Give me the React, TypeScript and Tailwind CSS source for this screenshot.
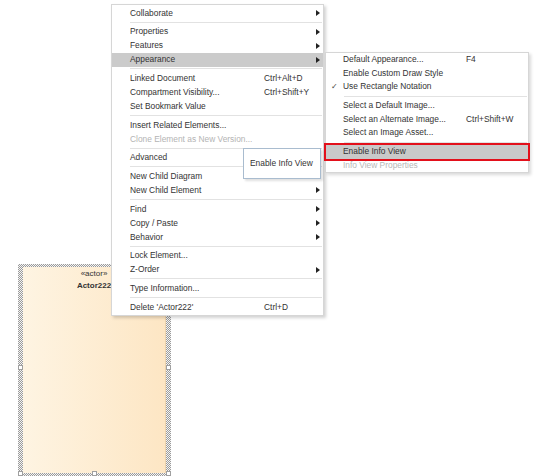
type Row =
  | { sep: true }
  | {
      sep?: false;
      label: string;
      shortcut?: string;
      arrow?: boolean;
      disabled?: boolean;
      active?: boolean;
      check?: boolean;
      boxed?: boolean;
    };

const mainItems: Row[] = [
  { label: "Collaborate", arrow: true },
  { sep: true },
  { label: "Properties", arrow: true },
  { label: "Features", arrow: true },
  { label: "Appearance", arrow: true, active: true },
  { sep: true },
  { label: "Linked Document", shortcut: "Ctrl+Alt+D" },
  { label: "Compartment Visibility...", shortcut: "Ctrl+Shift+Y" },
  { label: "Set Bookmark Value" },
  { sep: true },
  { label: "Insert Related Elements..." },
  { label: "Clone Element as New Version...", disabled: true },
  { sep: true },
  { label: "Advanced", arrow: true },
  { sep: true },
  { label: "New Child Diagram", arrow: true },
  { label: "New Child Element", arrow: true },
  { sep: true },
  { label: "Find", arrow: true },
  { label: "Copy / Paste", arrow: true },
  { label: "Behavior", arrow: true },
  { sep: true },
  { label: "Lock Element..." },
  { label: "Z-Order", arrow: true },
  { sep: true },
  { label: "Type Information..." },
  { sep: true },
  { label: "Delete 'Actor222'", shortcut: "Ctrl+D" },
];

const subItems: Row[] = [
  { label: "Default Appearance...", shortcut: "F4" },
  { label: "Enable Custom Draw Style" },
  { label: "Use Rectangle Notation", check: true },
  { sep: true },
  { label: "Select a Default Image..." },
  { label: "Select an Alternate Image...", shortcut: "Ctrl+Shift+W" },
  { label: "Select an Image Asset..." },
  { sep: true },
  { label: "Enable Info View", boxed: true },
  { label: "Info View Properties", disabled: true },
];

function Arrow() {
  return (
    <svg width="4" height="6" viewBox="0 0 4 6" className="ml-auto mr-[3px]">
      <path d="M0 0L4 3L0 6Z" fill="#222" />
    </svg>
  );
}

function MainMenu() {
  return (
    <div className="absolute left-[111px] top-[4px] w-[213px] border border-[#d6d6d6] bg-white py-px shadow-[2px_2px_3px_rgba(0,0,0,0.18)]">
      {mainItems.map((it, i) =>
        it.sep ? (
          <div key={i} className="flex h-[4.67px] items-center pl-[18px] pr-px">
            <div className="h-px w-full bg-[#e2e2e2]" />
          </div>
        ) : (
          <div
            key={i}
            className={`flex h-[14px] items-center pl-[18px] ${
              it.active ? "bg-[#cbcbcb]" : ""
            } ${it.disabled ? "text-[#b4b4b4]" : "text-[#333]"}`}
          >
            <span className="w-[134px] shrink-0 whitespace-nowrap">{it.label}</span>
            {it.shortcut && <span>{it.shortcut}</span>}
            {it.arrow && <Arrow />}
          </div>
        )
      )}
    </div>
  );
}

function SubMenu() {
  return (
    <div className="absolute left-[325px] top-[52px] w-[204px] border border-[#d6d6d6] bg-white shadow-[2px_2px_3px_rgba(0,0,0,0.15)]">
      {subItems.map((it, i) =>
        it.sep ? (
          <div key={i} className="flex h-[5.5px] items-center pl-[18px] pr-px">
            <div className="h-px w-full bg-[#e2e2e2]" />
          </div>
        ) : (
          <div
            key={i}
            className={`flex h-[13.5px] items-center ${
              it.boxed
                ? "bg-[#c9c9c9] outline-2 outline-offset-[0.5px] outline-[#e3101b]"
                : ""
            } ${it.disabled ? "text-[#b8b8b8]" : "text-[#333]"}`}
          >
            <span className="w-[17px] shrink-0 pl-[5px] text-[8px] text-[#444]">
              {it.check ? "✓" : ""}
            </span>
            <span className="w-[123px] shrink-0 whitespace-nowrap">{it.label}</span>
            {it.shortcut && <span>{it.shortcut}</span>}
          </div>
        )
      )}
    </div>
  );
}

function Handle({ cls }: { cls: string }) {
  return (
    <div
      className={`absolute h-[5px] w-[5px] border border-[#a0a0a0] bg-white ${cls}`}
    />
  );
}

function Actor() {
  return (
    <div className="absolute left-[18px] top-[264px] h-[214px] w-[153px] bg-[repeating-conic-gradient(#9a9a9a_0_25%,#f4f4f4_0_50%)] bg-[length:2px_2px] px-[5px] pt-[3px] pb-[5px]">
      <div className="flex h-full flex-col items-center border-r border-[#ecd2ac] bg-[linear-gradient(to_right,#fef4e2,#fde6c4)] pt-[1px] leading-[12px] text-[#333]">
        <span className="text-[8px]">«actor»</span>
        <span className="text-[8px] font-bold">Actor222</span>
      </div>
      <Handle cls="left-[0px] top-[101px]" />
      <Handle cls="right-[0px] top-[101px]" />
      <Handle cls="left-[0px] top-[207px]" />
      <Handle cls="left-[74px] top-[207px]" />
      <Handle cls="right-[0px] top-[207px]" />
    </div>
  );
}

export default function App() {
  return (
    <div
      className="relative h-[476px] w-[543px] overflow-hidden bg-white text-[8.4px]"
      style={{ fontFamily: '"Liberation Sans", Arial, sans-serif' }}
    >
      <Actor />
      <MainMenu />
      <SubMenu />
      <div className="absolute left-[243px] top-[148px] flex h-[31px] w-[78px] items-center border border-[#a9bccf] bg-white pl-[6px] text-[#333] shadow-[2px_2px_2px_rgba(0,0,0,0.12)]">
        Enable Info View
      </div>
    </div>
  );
}
